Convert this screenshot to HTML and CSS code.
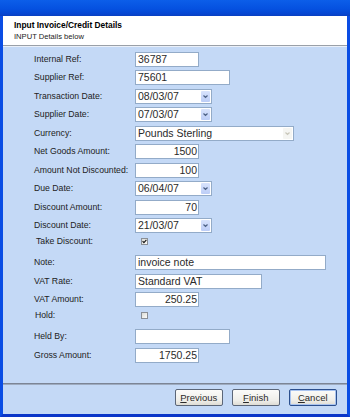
FILE: index.html
```html
<!DOCTYPE html>
<html>
<head>
<meta charset="utf-8">
<link rel="stylesheet" href="styles.css">
</head>
<body>
<div class="window">
  <div class="titlebar"></div>
  <div class="frame">
    <div class="header">
      <div class="h-title">Input Invoice/Credit Details</div>
      <div class="h-sub">INPUT Details below</div>
    </div>
    <div class="content">
      <div class="form">
        <div class="row"><label>Internal Ref:</label><div class="field w64">36787</div></div>
        <div class="row"><label>Supplier Ref:</label><div class="field w95">75601</div></div>
        <div class="row"><label>Transaction Date:</label><div class="combo w77"><span class="ctext">08/03/07</span><span class="arrow"><svg viewBox="0 0 7 5" width="7" height="5"><path d="M1.5 1.5 L3.5 3.5 L5.5 1.5" fill="none" stroke="#4d6185" stroke-width="1.2"/></svg></span></div></div>
        <div class="row"><label>Supplier Date:</label><div class="combo w77"><span class="ctext">07/03/07</span><span class="arrow"><svg viewBox="0 0 7 5" width="7" height="5"><path d="M1.5 1.5 L3.5 3.5 L5.5 1.5" fill="none" stroke="#4d6185" stroke-width="1.2"/></svg></span></div></div>
        <div class="row"><label>Currency:</label><div class="combo w159 disabled"><span class="ctext">Pounds Sterling</span><span class="arrow"><svg viewBox="0 0 7 5" width="7" height="5"><path d="M1.5 1.5 L3.5 3.5 L5.5 1.5" fill="none" stroke="#c9c7ba" stroke-width="1.2"/></svg></span></div></div>
        <div class="row"><label>Net Goods Amount:</label><div class="field w64 num">1500</div></div>
        <div class="row"><label>Amount Not Discounted:</label><div class="field w64 num">100</div></div>
        <div class="row"><label>Due Date:</label><div class="combo w77"><span class="ctext">06/04/07</span><span class="arrow"><svg viewBox="0 0 7 5" width="7" height="5"><path d="M1.5 1.5 L3.5 3.5 L5.5 1.5" fill="none" stroke="#4d6185" stroke-width="1.2"/></svg></span></div></div>
        <div class="row"><label>Discount Amount:</label><div class="field w64 num">70</div></div>
        <div class="row"><label>Discount Date:</label><div class="combo w77"><span class="ctext">21/03/07</span><span class="arrow"><svg viewBox="0 0 7 5" width="7" height="5"><path d="M1.5 1.5 L3.5 3.5 L5.5 1.5" fill="none" stroke="#4d6185" stroke-width="1.2"/></svg></span></div></div>
        <div class="row chk-row"><label class="ind2">Take Discount:</label><span class="checkbox"><svg viewBox="0 0 5 5" width="5" height="5"><path d="M0.6 2.2 L1.9 3.6 L4.4 0.9" fill="none" stroke="#111" stroke-width="1.1"/></svg></span></div>
        <div class="row"><label>Note:</label><div class="field w191">invoice note</div></div>
        <div class="row"><label>VAT Rate:</label><div class="field w127">Standard VAT</div></div>
        <div class="row"><label>VAT Amount:</label><div class="field w64 num">250.25</div></div>
        <div class="row chk-row"><label class="ind1">Hold:</label><span class="checkbox"></span></div>
        <div class="row"><label>Held By:</label><div class="field w95"></div></div>
        <div class="row"><label>Gross Amount:</label><div class="field w64 num">1750.25</div></div>
      </div>
      <div class="footer">
        <button class="btn"><u>P</u>revious</button>
        <button class="btn"><u>F</u>inish</button>
        <button class="btn default"><u>C</u>ancel</button>
      </div>
    </div>
  </div>
</div>
</body>
</html>
```

FILE: styles.css
```css
html, body {
  margin: 0;
  padding: 0;
  width: 350px;
  height: 417px;
  overflow: hidden;
  font-family: "Liberation Sans", Arial, sans-serif;
  color: #111;
}

.window {
  width: 350px;
  height: 417px;
  display: flex;
  flex-direction: column;
}

.titlebar {
  height: 16px;
  flex: none;
  background: linear-gradient(#0c5ee9, #0551e0 55%, #0646d2 85%, #0a3fc0);
}

.frame {
  flex: 1;
  display: flex;
  flex-direction: column;
  border-left: 3px solid #0a4de4;
  border-right: 3px solid #0a4de4;
  border-bottom: 3px solid #0b36c8;
  box-shadow: inset 1px 0 0 #1660ea, inset -1px 0 0 #1660ea;
}

.header {
  height: 30px;
  flex: none;
  background: #ffffff;
  border-bottom: 1px solid #9aa0a8;
  box-shadow: 0 1px 0 #eaf0f9;
  padding-left: 11px;
  box-sizing: border-box;
  display: flex;
  flex-direction: column;
  justify-content: center;
  gap: 2px;
  padding-top: 1px;
}

.h-title {
  font-weight: bold;
  font-size: 8.4px;
  line-height: 10px;
  color: #000;
}

.h-sub {
  font-size: 7.6px;
  line-height: 10px;
  color: #222;
}

.content {
  flex: 1;
  display: flex;
  flex-direction: column;
  background: #c4d9f6;
  margin-top: 1px;
}

.form {
  padding-top: 3px;
  padding-left: 31px;
  display: flex;
  flex-direction: column;
}

.row {
  height: 18.5px;
  display: grid;
  grid-template-columns: 101px 1fr;
  align-items: center;
}

.row label {
  font-size: 8.7px;
  color: #222;
  line-height: 11px;
}

.row label.ind2 { padding-left: 2px; }
.row label.ind1 { padding-left: 1px; }

.chk-row label,
.chk-row .checkbox {
  margin-bottom: 5px;
}

.field,
.combo {
  height: 15px;
  box-sizing: border-box;
  border: 1px solid #93abc8;
  background: #fff;
  font-size: 10.5px;
  line-height: 13px;
  color: #2a2a2a;
  white-space: nowrap;
  overflow: hidden;
}

.field {
  padding: 0 1px 0 2px;
}

.field.num {
  text-align: right;
}

.w64 { width: 64px; }
.w77 { width: 77px; }
.w95 { width: 95px; }
.w127 { width: 127px; }
.w159 { width: 159px; }
.w191 { width: 191px; }

.combo {
  display: flex;
  align-items: stretch;
}

.ctext {
  flex: 1;
  padding-left: 2px;
}

.arrow {
  width: 9px;
  flex: none;
  margin: 1px 1px 1px 0;
  background: linear-gradient(#d8e3fc, #bccdf7);
  border-radius: 1px;
  display: flex;
  align-items: center;
  justify-content: center;
}

.combo.disabled .arrow {
  background: #f5f5f2;
}

.checkbox {
  width: 7px;
  height: 7px;
  box-sizing: border-box;
  border: 1px solid #8a8f96;
  background: linear-gradient(135deg, #dcdcd6, #fbfbfa);
  margin-left: 6px;
  display: flex;
  align-items: center;
  justify-content: center;
}

.checkbox svg {
  display: block;
}

.footer {
  margin-top: auto;
  height: 31px;
  box-sizing: border-box;
  border-top: 1px solid #7c8595;
  box-shadow: inset 0 1px 0 #9eabbf;
  padding: 5px 10px 8px 0;
  display: flex;
  justify-content: flex-end;
  align-items: flex-start;
  gap: 8.5px;
}

.btn {
  width: 48.5px;
  height: 17px;
  box-sizing: border-box;
  border: 1px solid #5b6678;
  border-radius: 2px;
  background: linear-gradient(#fbfbf9, #efeee9 70%, #dedcd4);
  font-family: "Liberation Sans", Arial, sans-serif;
  font-size: 9.5px;
  color: #2a2a2a;
  padding: 0;
  line-height: 14px;
}

.btn.default {
  border-color: #2b4f8e;
  box-shadow: inset 0 0 0 1px #a9c4f0;
}
```
